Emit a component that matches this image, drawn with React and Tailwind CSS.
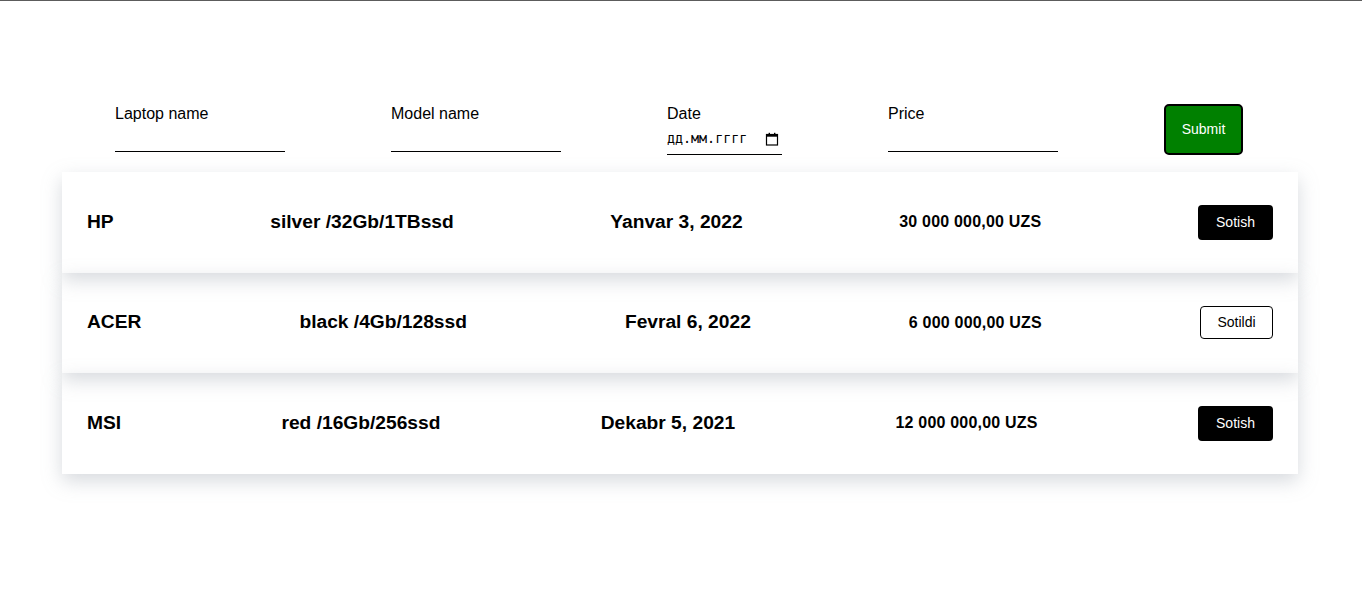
import React from "react";

const rows = [
  { name: "HP", spec: "silver /32Gb/1TBssd", date: "Yanvar 3, 2022", price: "30 000 000,00 UZS", sold: false },
  { name: "ACER", spec: "black /4Gb/128ssd", date: "Fevral 6, 2022", price: "6 000 000,00 UZS", sold: true },
  { name: "MSI", spec: "red /16Gb/256ssd", date: "Dekabr 5, 2021", price: "12 000 000,00 UZS", sold: false },
];

function Field({ label }) {
  return (
    <div className="flex flex-col w-[170px]">
      <label className="text-[16px] leading-[18px] text-black">{label}</label>
      <input type="text" className="h-[29px] w-full border-b border-black outline-none bg-transparent" />
    </div>
  );
}

function CalendarIcon() {
  return (
    <svg width="14" height="14" viewBox="0 0 14 14" fill="none">
      <rect x="1.5" y="2.5" width="11" height="10.5" stroke="#000" strokeWidth="1.2" fill="none" />
      <rect x="1.5" y="2.5" width="11" height="2.2" fill="#000" />
      <rect x="3.6" y="0.8" width="1.4" height="2.4" fill="#000" />
      <rect x="9" y="0.8" width="1.4" height="2.4" fill="#000" />
    </svg>
  );
}

export default function App() {
  return (
    <div className="min-h-[613px] bg-white border-t border-[#5c5c5c] text-black" style={{ fontFamily: '"Liberation Sans", Arial, sans-serif' }}>
      <div className="ml-[62px] w-[1236px] pt-[103px]">
        <div className="flex justify-around items-start pr-[2px]">
          <div className="pt-[1px]"><Field label="Laptop name" /></div>
          <div className="pt-[1px]"><Field label="Model name" /></div>
          <div className="flex flex-col w-[115px] pt-[1px]">
            <label className="text-[16px] leading-[18px]">Date</label>
            <div className="h-[32px] border-b border-black flex items-center justify-between pr-[3px]">
              <span className="text-[13.33px] text-black" style={{ fontFamily: '"DejaVu Sans Mono", monospace' }}>дд.мм.гггг</span>
              <CalendarIcon />
            </div>
          </div>
          <div className="pt-[1px]"><Field label="Price" /></div>
          <button className="w-[79px] h-[51px] bg-[#008000] border-2 border-black rounded-[5px] text-white text-[14px]">
            Submit
          </button>
        </div>
        <div className="mt-[17px] flex flex-col">
          {rows.map((r) => (
            <div
              key={r.name}
              className="h-[100.5px] px-[25px] flex items-center justify-between shadow-[0_7px_18px_rgba(140,148,160,0.35)]"
            >
              <span className="text-[19.2px] font-bold">{r.name}</span>
              <span className="text-[19.2px] font-bold">{r.spec}</span>
              <span className="text-[19.2px] font-bold">{r.date}</span>
              <span className="text-[16px] font-bold tracking-[0.2px]">{r.price}</span>
              {r.sold ? (
                <button className="w-[73px] h-[33px] border border-black rounded-[4px] bg-white text-black text-[14px]">
                  Sotildi
                </button>
              ) : (
                <button className="w-[75px] h-[35px] bg-black rounded-[4px] text-white text-[14px]">
                  Sotish
                </button>
              )}
            </div>
          ))}
        </div>
      </div>
    </div>
  );
}
